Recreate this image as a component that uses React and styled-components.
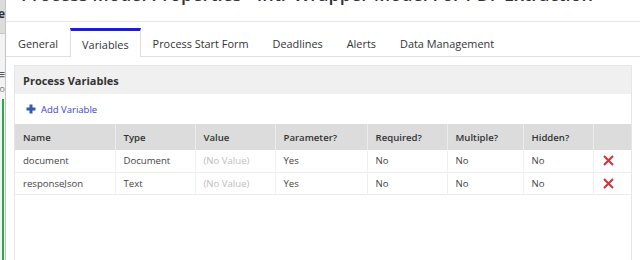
import React from "react";
import styled, { createGlobalStyle } from "styled-components";

const GlobalStyle = createGlobalStyle`
  html, body { margin: 0; padding: 0; background: #fff; }
  body { font-family: "Open Sans", "Noto Sans", sans-serif; color: #333; }
  * { box-sizing: border-box; }
`;

const Page = styled.div`
  display: flex;
  width: 640px;
  height: 260px;
  overflow: hidden;
  background: #fff;
`;

const Backdrop = styled.div`
  width: 5px;
  flex: none;
  display: flex;
  flex-direction: column;
  overflow: hidden;
  background: #f3f3f3;
`;

const BackCap = styled.div`
  height: 34px;
  flex: none;
  background: #dcdcdc;
  border-bottom: 1px solid #c9c9c9;
  display: flex;
  justify-content: flex-end;
  align-items: center;
  font-size: 12px;
  font-weight: 700;
  color: #333;
  line-height: 1;
  padding-bottom: 6px;
`;

const BackGlyph = styled.div`
  display: flex;
  justify-content: flex-end;
  font-size: ${(p) => p.$size}px;
  color: ${(p) => p.$color};
  line-height: 1;
  margin-top: ${(p) => p.$gap}px;
  white-space: nowrap;
`;

const GreenRail = styled.div`
  flex: 1;
  margin-top: 6px;
  margin-left: 2px;
  width: 2px;
  background: #2aa64f;
`;

const Modal = styled.div`
  flex: 1;
  display: flex;
  flex-direction: column;
  border-left: 1px solid #c4c4c4;
  min-width: 0;
`;

const TitleBar = styled.div`
  height: 22px;
  flex: none;
  display: flex;
  align-items: flex-end;
  padding: 0 0 18.5px 15px;
  border-bottom: 1px solid #e6e6e6;
  overflow: hidden;
`;

const Title = styled.div`
  font-size: 18px;
  font-weight: 600;
  line-height: 18px;
  color: #333;
  white-space: nowrap;
`;

const TabBar = styled.div`
  display: flex;
  align-items: flex-end;
  padding-top: 6px;
  border-bottom: 1px solid #e0e0e0;
  flex: none;
`;

const Tab = styled.div`
  height: ${(p) => (p.$active ? 29 : 28)}px;
  padding: 0 ${(p) => (p.$active ? 11 : 12)}px;
  display: flex;
  align-items: center;
  font-size: 10.9px;
  color: #333;
  white-space: nowrap;
  background: #fff;
  border-top: ${(p) => (p.$active ? "3px solid #1b1be6" : "3px solid transparent")};
  border-left: ${(p) => (p.$active ? "1px solid #dcdcdc" : "none")};
  border-right: ${(p) => (p.$active ? "1px solid #dcdcdc" : "none")};
  margin-bottom: ${(p) => (p.$active ? -1 : 0)}px;
`;

const Body = styled.div`
  flex: 1;
  display: flex;
  flex-direction: column;
  padding: 8px 8px 0 8px;
  min-height: 0;
`;

const Panel = styled.div`
  flex: 1;
  display: flex;
  flex-direction: column;
  border: 1px solid #e6e6e6;
  border-bottom: none;
`;

const PanelHeader = styled.div`
  height: 28px;
  flex: none;
  display: flex;
  align-items: center;
  padding-left: 8px;
  background: #f0f0f0;
  font-size: 11px;
  font-weight: 700;
  color: #333;
`;

const Toolbar = styled.div`
  height: 30px;
  flex: none;
  display: flex;
  align-items: center;
  padding-left: 11px;
`;

const AddButton = styled.button`
  display: flex;
  align-items: center;
  gap: 5px;
  padding: 0;
  border: none;
  background: none;
  font-family: inherit;
  font-size: 9.5px;
  color: #3d3dd6;
  cursor: pointer;
`;

const Table = styled.table`
  width: 100%;
  border-collapse: collapse;
  table-layout: fixed;
`;

const HeadCell = styled.th`
  height: 26px;
  padding: 0 8px;
  text-align: left;
  background: #dcdcdc;
  font-size: 9.6px;
  font-weight: 600;
  color: #333;
  border-left: 1px solid #ececec;
  &:first-child { border-left: none; }
`;

const Row = styled.tr`
  background: #fff;
  border-bottom: 1px solid #ececec;
`;

const Cell = styled.td`
  height: 22px;
  padding: ${(p) => (p.$action ? "0 0 0 9px" : "0 8px")};
  font-size: 9.6px;
  color: ${(p) => (p.$muted ? "#bdbdbd" : "#444")};
  border-left: 1px solid #f0f0f0;
  white-space: nowrap;
  &:first-child { border-left: none; }
`;

const DeleteIcon = styled.svg`
  display: block;
  width: 11px;
  height: 11px;
`;

const PlusIcon = () => (
  <svg width="10" height="10" viewBox="0 0 10 10">
    <path d="M5 0.5v9M0.5 5h9" stroke="#2f5bb5" strokeWidth="3" />
  </svg>
);

const CrossIcon = () => (
  <DeleteIcon viewBox="0 0 11 11">
    <path d="M1 1L10 10M10 1L1 10" stroke="#d6313a" strokeWidth="2" />
  </DeleteIcon>
);

const tabs = ["General", "Variables", "Process Start Form", "Deadlines", "Alerts", "Data Management"];
const columns = [
  ["Name", 100],
  ["Type", 80],
  ["Value", 80],
  ["Parameter?", 92],
  ["Required?", 80],
  ["Multiple?", 76],
  ["Hidden?", 70],
  ["", 38],
];
const rows = [
  { name: "document", type: "Document" },
  { name: "responseJson", type: "Text" },
];

export default function App() {
  return (
    <>
      <GlobalStyle />
      <Page>
        <Backdrop>
          <BackCap>e</BackCap>
          <BackGlyph $size={13} $color="#555" $gap={34}>≡</BackGlyph>
          <BackGlyph $size={9} $color="#777" $gap={3}>o</BackGlyph>
          <GreenRail />
        </Backdrop>
        <Modal>
          <TitleBar>
            <Title>Process Model Properties - Intr Wrapper Model For PDF Extraction</Title>
          </TitleBar>
          <TabBar>
            {tabs.map((t) => (
              <Tab key={t} $active={t === "Variables"}>{t}</Tab>
            ))}
          </TabBar>
          <Body>
            <Panel>
              <PanelHeader>Process Variables</PanelHeader>
              <Toolbar>
                <AddButton>
                  <PlusIcon />
                  Add Variable
                </AddButton>
              </Toolbar>
              <Table>
                <colgroup>
                  {columns.map(([c, w], i) => (
                    <col key={i} style={{ width: w }} />
                  ))}
                </colgroup>
                <thead>
                  <tr>
                    {columns.map(([c], i) => (
                      <HeadCell key={i}>{c}</HeadCell>
                    ))}
                  </tr>
                </thead>
                <tbody>
                  {rows.map((r) => (
                    <Row key={r.name}>
                      <Cell>{r.name}</Cell>
                      <Cell>{r.type}</Cell>
                      <Cell $muted>(No Value)</Cell>
                      <Cell>Yes</Cell>
                      <Cell>No</Cell>
                      <Cell>No</Cell>
                      <Cell>No</Cell>
                      <Cell $action>
                        <CrossIcon />
                      </Cell>
                    </Row>
                  ))}
                </tbody>
              </Table>
            </Panel>
          </Body>
        </Modal>
      </Page>
    </>
  );
}
